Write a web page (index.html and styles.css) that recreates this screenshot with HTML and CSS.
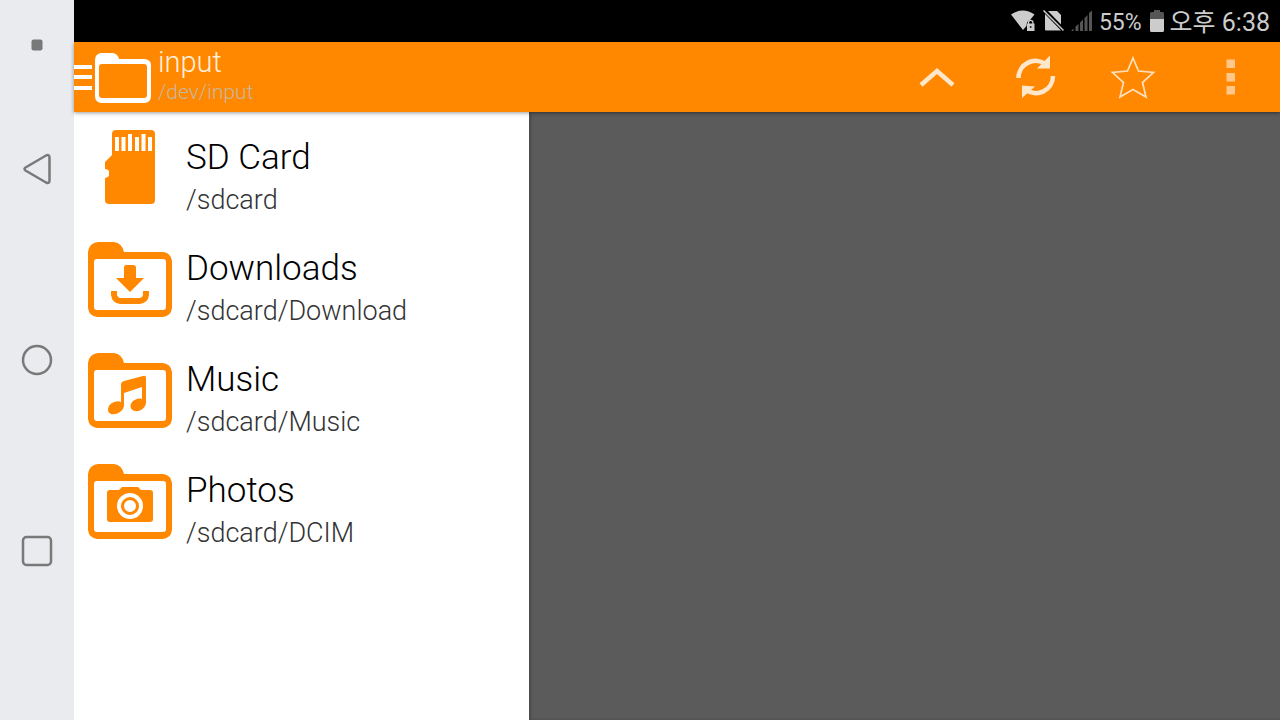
FILE: index.html
```html
<!DOCTYPE html>
<html lang="ko">
<head>
    <meta charset="UTF-8">
    <meta name="viewport" content="width=device-width, initial-scale=1.0">
    <title>input</title>
    <link rel="stylesheet" href="styles.css">
</head>
<body>
    <!-- System navigation -->
    <nav class="system-nav">
        <button class="nav-dot" aria-label="Hide navigation">
            <svg width="12" height="12" viewBox="0 0 12 12"><rect x=".5" y=".5" width="11" height="11" rx="2" fill="#777a78"/></svg>
        </button>
        <button aria-label="Back">
            <svg width="32" height="32" viewBox="0 0 32 32"><path d="M4.500 14.500 L25 2.500 Q28.500 1 28.500 4.500 V27.500 Q28.500 31 25 29.500 L4.500 17.500 Q2.500 16 4.500 14.500Z"/></svg>
        </button>
        <button aria-label="Home">
            <svg width="32" height="32" viewBox="0 0 32 32"><circle cx="16" cy="16" r="14"/></svg>
        </button>
        <button aria-label="Recent apps">
            <svg width="32" height="32" viewBox="0 0 32 32"><rect x="2" y="2" width="28" height="28" rx="3.500"/></svg>
        </button>
    </nav>

    <div class="screen">
        <div class="status-bar">
            <svg width="25" height="22" viewBox="0 0 25 22">
                <path d="M0 4.500 Q12 -3.500 23.500 4.500 L19 10 Q15.500 11 15.500 16 L12 20Z" fill="#ccc"/>
                <path d="M17.500 14 V12.500 a2.200 2.200 0 0 1 4.400 0 V14" fill="none" stroke="#ccc" stroke-width="1.300"/>
                <rect x="16" y="13.500" width="7.500" height="7.500" fill="#ccc"/>
                <circle cx="19.700" cy="17" r="1" fill="#222"/>
            </svg>
            <svg class="no-sim" width="22" height="22" viewBox="0 0 22 22">
                <path d="M5 1 H14 L18 5 V14.500Z M2 4 L18 20.500 H3 Q2 20.500 2 19.500Z" fill="#ccc"/>
                <path d="M.500 .500 L20.500 20.500" stroke="#ccc" stroke-width="1.500"/>
            </svg>
            <svg class="signal" width="22" height="22" viewBox="0 0 22 22" fill="#555">
                <path d="M0 21 L2.500 18.500 V21Z M4.500 21 V16.500 L7.500 14 V21Z M9 21 V12.500 L12 9.500 V21Z M13.500 21 V8 L16.500 5 V21Z M18 21 V3 L21 .500 V21Z"/>
            </svg>
            <span class="battery-level">55%</span>
            <svg class="battery" width="14" height="22" viewBox="0 0 14 22">
                <path d="M4 0 H10 V2 H12.500 Q14 2 14 3.500 V9 H0 V3.500 Q0 2 1.500 2 H4Z" fill="#555"/>
                <path d="M0 9 H14 V20.500 Q14 22 12.500 22 H1.500 Q0 22 0 20.500Z" fill="#ccc"/>
            </svg>
            <time class="clock">오후 6:38</time>
        </div>

        <header class="action-bar">
            <button class="drawer-toggle" aria-label="Close drawer">
                <svg width="18" height="50" viewBox="0 0 18 50" fill="#fff"><path d="M0 12H18V16H0Z M0 22H18V26H0Z M0 33H18V37H0Z"/></svg>
                <svg width="56" height="50" viewBox="0 0 56 50" fill="#fff">
                    <path fill-rule="evenodd" d="M6 0 H18 Q23 1 24 6 H50 Q56 7 56 12 V43 Q56 49 50 50 H6 Q0 49 0 43 V7 Q0 1 6 0Z M7 11 Q4 11 4 14 V42 Q4 45 7 45 H49 Q52 45 52 42 V14 Q52 11 49 11Z"/>
                </svg>
            </button>
            <div class="titles">
                <h1>input</h1>
                <p>/dev/input</p>
            </div>
            <div class="actions">
                <button aria-label="Up">
                    <svg width="48" height="48" viewBox="0 0 48 48"><path d="M8 32 L24 18 L40 32" fill="none" stroke="#ffe7cc" stroke-width="4.500"/></svg>
                </button>
                <button aria-label="Refresh">
                    <svg width="48" height="48" viewBox="0 0 48 48">
                        <path d="M7.500 25 A17 17 0 0 1 35 11.500 M42 23 A17 17 0 0 1 14.500 36.500" fill="none" stroke="#ffe7cc" stroke-width="4.500"/>
                        <path d="M39 2.500 V15.500 H26Z M11 45 V32.500 L24 33.500Z" fill="#ffe7cc"/>
                    </svg>
                </button>
                <button aria-label="Bookmark">
                    <svg width="48" height="48" viewBox="0 0 48 48"><path d="M24 5 L29.500 18 L44.500 19.500 L33.500 29.500 L37 44 L24 36.500 L11 44 L14.500 29.500 L3.500 19.500 L18.500 18Z" fill="none" stroke="#ffe0bd" stroke-width="1.700"/></svg>
                </button>
                <button aria-label="More options">
                    <svg width="48" height="48" viewBox="0 0 48 48" fill="#ffc88a"><path d="M19.500 6.500H28V15H19.500Z M19.500 20H28V28.500H19.500Z M19.500 33H28V41.500H19.500Z"/></svg>
                </button>
            </div>
        </header>

        <main class="content">
            <ul class="drawer">
                <li>
                    <a href="#sdcard">
                        <svg width="84" height="76" viewBox="0 0 84 76">
                            <path d="M28 0 H63 Q67 0 67 4 V70 Q67 74 63 74 H21 Q17 74 17 70 V48 Q21 47 21 45 V41 Q20 39 17 39 V32 L24 25 V4 Q24 0 28 0Z" fill="#f80"/>
                            <path d="M27 7H31V21H27Z M33.500 7H37.500V21H33.500Z M40 4H44V21H40Z M47 7H51V21H47Z M53.500 4H57.500V21H53.500Z M60 7H64V21H60Z" fill="#fff"/>
                        </svg>
                        <div>
                            <h2>SD Card</h2>
                            <p>/sdcard</p>
                        </div>
                    </a>
                </li>
                <li>
                    <a href="#downloads">
                        <svg width="84" height="78" viewBox="0 -2 84 78" fill="#f80">
                            <path fill-rule="evenodd" d="M10 0 H26 Q34 1 36 10 H75 Q83 11 84 19 V66 Q83 74 75 75 H9 Q1 74 0 66 V10 Q1 1 10 0Z M9 17 Q6 17 6 20 V65 Q6 68 9 68 H75 Q78 68 78 65 V20 Q78 17 75 17Z"/>
                            <path d="M38 23 H45 Q48 23 48 26 V36 H56 L42 50 L28 36 H36 V26 Q36 23 38 23Z"/>
                            <path d="M23 49 H29 V52 Q29 56 33 56 H51 Q55 56 55 52 V49 H61 V53 Q60 61 52 62 H32 Q24 61 23 53Z"/>
                        </svg>
                        <div>
                            <h2>Downloads</h2>
                            <p>/sdcard/Download</p>
                        </div>
                    </a>
                </li>
                <li>
                    <a href="#music">
                        <svg width="84" height="78" viewBox="0 -2 84 78" fill="#f80">
                            <path fill-rule="evenodd" d="M10 0 H26 Q34 1 36 10 H75 Q83 11 84 19 V66 Q83 74 75 75 H9 Q1 74 0 66 V10 Q1 1 10 0Z M9 17 Q6 17 6 20 V65 Q6 68 9 68 H75 Q78 68 78 65 V20 Q78 17 75 17Z"/>
                            <path d="M33 31 Q33 29 36 28 L55 23 Q58 22 58 25 V49 C58 55 52 59 47 58 C42 57 41 52 45 48 C48 46 51 45 54 46 V34 L36 40 V53 C35 59 28 62 23 61 C18 59 20 52 24 50 Q29 47 33 49Z"/>
                        </svg>
                        <div>
                            <h2>Music</h2>
                            <p>/sdcard/Music</p>
                        </div>
                    </a>
                </li>
                <li>
                    <a href="#photos">
                        <svg width="84" height="78" viewBox="0 -2 84 78" fill="#f80">
                            <path fill-rule="evenodd" d="M10 0 H26 Q34 1 36 10 H75 Q83 11 84 19 V66 Q83 74 75 75 H9 Q1 74 0 66 V10 Q1 1 10 0Z M9 17 Q6 17 6 20 V65 Q6 68 9 68 H75 Q78 68 78 65 V20 Q78 17 75 17Z"/>
                            <path d="M22 26 H31 L34 23 H50 L53 26 H62 Q65 26 65 29 V55 Q65 58 62 58 H22 Q19 58 19 55 V29 Q19 26 22 26Z"/>
                            <circle cx="42" cy="42" r="13" fill="#fff"/>
                            <circle cx="42" cy="42" r="7.500" fill="none" stroke="#f80" stroke-width="3"/>
                        </svg>
                        <div>
                            <h2>Photos</h2>
                            <p>/sdcard/DCIM</p>
                        </div>
                    </a>
                </li>
            </ul>
            <div class="scrim"></div>
        </main>
    </div>
</body>
</html>
```
FILE: styles.css
```css
* {
    box-sizing: border-box;
}

body {
    margin: 0;
    min-height: 100vh;
    display: flex;
    font-family: Roboto, "Noto Sans CJK KR", sans-serif;
    font-weight: 300;
    background-color: #5b5b5b;
}

h1, h2, p, ul {
    margin: 0;
    padding: 0;
    font-weight: 300;
}

button {
    display: flex;
    align-items: center;
    justify-content: center;
    padding: 0;
    border: none;
    background: none;
    cursor: pointer;
}

svg {
    display: block;
    flex-shrink: 0;
}

/* System navigation */
.system-nav {
    width: 74px;
    flex-shrink: 0;
    display: grid;
    grid-template-rows: 74px 1fr 1fr 1fr 74px;
    background-color: #e9ebee;
}

.system-nav svg {
    fill: none;
    stroke: #777a78;
    stroke-width: 2.5px;
}

.system-nav .nav-dot {
    padding-top: 16px;
}

.system-nav .nav-dot svg {
    stroke: none;
}

.screen {
    flex: 1;
    display: flex;
    flex-direction: column;
}

/* Status bar */
.status-bar {
    height: 42px;
    display: flex;
    align-items: center;
    justify-content: flex-end;
    padding-right: 10px;
    background-color: #000;
    color: #ccc;
    font-size: 23px;
    font-weight: 400;
    line-height: 40px;
}

.no-sim {
    margin-left: 7px;
}

.signal {
    margin-left: 6px;
}

.battery-level {
    margin-left: 6px;
    padding-top: 4px;
}

.battery {
    margin: 0 6px 0 8px;
}

.clock {
    padding-top: 4px;
    font-size: 25px;
}

/* Action bar */
.action-bar {
    position: relative;
    height: 70px;
    display: flex;
    align-items: center;
    background-color: #f80;
    box-shadow: 0 1px 4px rgba(0, 0, 0, 0.4);
}

.drawer-toggle {
    gap: 3px;
    padding-top: 2px;
}

.titles {
    margin-left: 7px;
    padding-bottom: 2px;
}

.titles h1 {
    color: #fff0df;
    font-size: 29px;
    line-height: 32px;
}

.titles p {
    color: #c8b79f;
    font-size: 21px;
    line-height: 28px;
}

.actions {
    display: flex;
    margin-left: auto;
}

.actions button {
    width: 98px;
    height: 70px;
}

/* Drawer */
.content {
    flex: 1;
    display: flex;
}

.drawer {
    width: 455px;
    list-style: none;
    background-color: #fff;
}

.drawer a {
    display: flex;
    align-items: center;
    gap: 14px;
    height: 111px;
    padding-left: 14px;
    color: #000;
    text-decoration: none;
}

.drawer a div {
    padding-top: 20px;
}

.drawer h2 {
    font-size: 35px;
    line-height: 44px;
}

.drawer p {
    color: #333;
    font-size: 27px;
    line-height: 40px;
}

.scrim {
    flex: 1;
    background-color: #5b5b5b;
    box-shadow: inset 2px 0 3px rgba(0, 0, 0, 0.2);
}
```
